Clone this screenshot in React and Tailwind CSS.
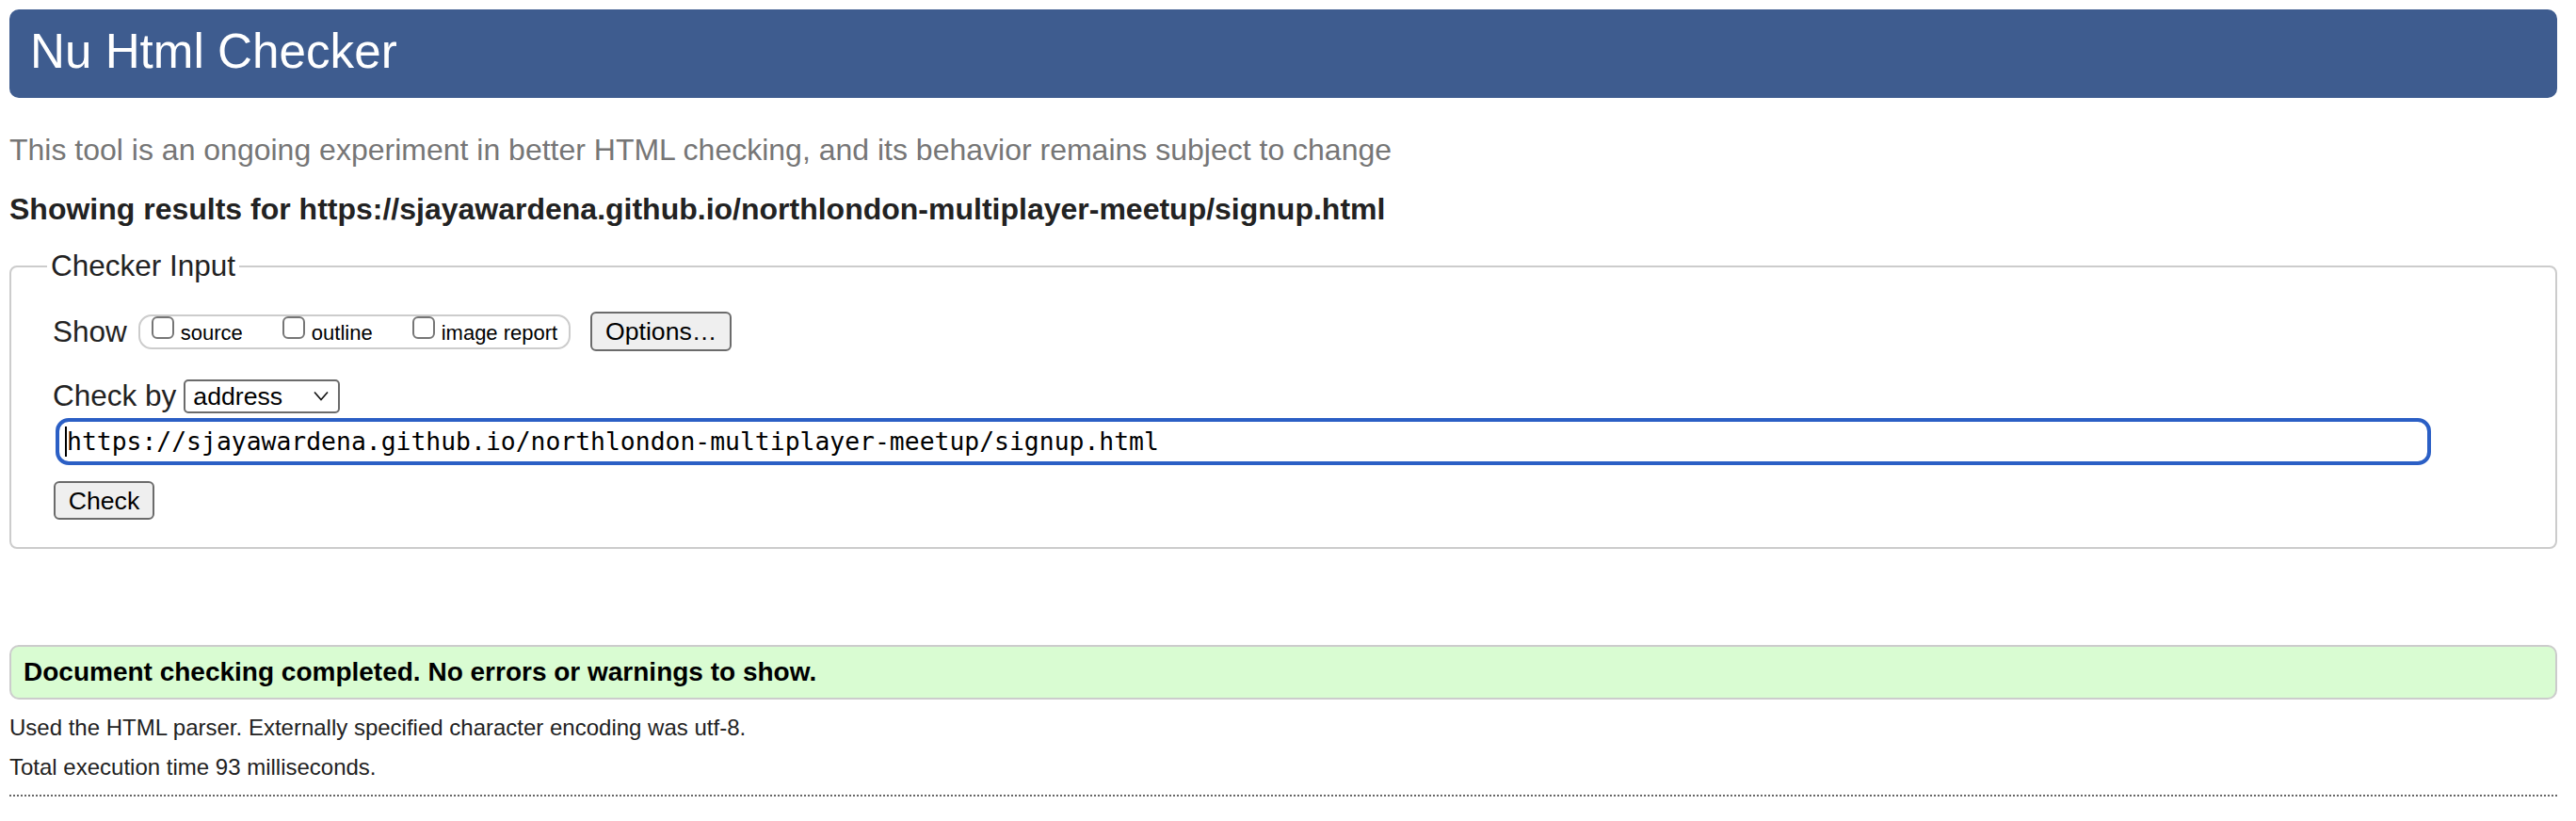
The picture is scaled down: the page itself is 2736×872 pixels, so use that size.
import React from 'react'

function Box({ label }) {
  return (
    <label className="flex items-start">
      <span className="w-[24px] h-[24px] shrink-0 rounded-[6px] border-2 border-[#767676] bg-white" />
      <span className="ml-[7px] mt-[5px] text-[22px] leading-[25px] text-black">{label}</span>
    </label>
  )
}

export default function App() {
  return (
    <div className="min-h-[872px] bg-white pl-[10px] pr-[20px] pt-[10px] font-['Liberation_Sans',Arial,Helvetica,sans-serif] text-[#222]">
      {/* banner */}
      <header className="flex h-[94px] items-center rounded-[10px] bg-[#3e5c8f] pb-[4px] pl-[22px]">
        <h1 className="text-[51.2px] leading-none font-normal text-white">Nu Html Checker</h1>
      </header>

      <p className="mt-[37px] text-[32px] leading-[37px] text-[#767676]">
        This tool is an ongoing experiment in better HTML checking, and its behavior remains subject to change
      </p>
      <p className="mt-[26px] text-[32px] leading-[37px] font-bold text-[#222]">
        Showing results for https://sjayawardena.github.io/northlondon-multiplayer-meetup/signup.html
      </p>

      {/* form */}
      <fieldset className="mt-[23px] rounded-[8px] border-2 border-[#cccccc] pt-[30px] pb-[29px] pl-[44px] pr-[44px]">
        <legend className="-ml-[6px] px-[4px] text-[31.5px] leading-[37px] text-[#222]">Checker Input</legend>

        <div className="flex h-[42px] items-center">
          <span className="text-[31.5px] leading-[37px]">Show</span>
          <div className="ml-[12px] flex h-[37px] items-start gap-[42px] rounded-[14px] border-2 border-[#cccccc] pl-[12px] pr-[12px]">
            <Box label="source" />
            <Box label="outline" />
            <Box label="image report" />
          </div>
          <button className="ml-[21px] flex h-[42px] w-[150px] items-center justify-center rounded-[6px] border-2 border-[#6b6b6b] bg-[#efefef] text-[26.67px] text-black">
            Options…
          </button>
        </div>

        <div className="mt-[29px] flex h-[37px] items-center">
          <span className="text-[31.5px] leading-[37px]">Check by</span>
          <div className="ml-[8px] flex h-[36px] w-[166px] items-center justify-between rounded-[5px] border-2 border-[#6b6b6b] bg-white pl-[8px] pr-[10px] text-[26.67px] text-black">
            <span>address</span>
            <svg width="16" height="11" viewBox="0 0 16 11">
              <path d="M1 1.5 L8 9.5 L15 1.5" fill="none" stroke="#111" strokeWidth="1.6" />
            </svg>
          </div>
        </div>

        <div className="mt-[5px] ml-[3px] mr-[88px] flex h-[50px] items-center rounded-[14px] border-4 border-[#2b5fc5] pl-[6px] font-['DejaVu_Sans_Mono',monospace] text-[26.4px] text-black">
          <span className="h-[32px] w-[2px] bg-black" />
          <span>https://sjayawardena.github.io/northlondon-multiplayer-meetup/signup.html</span>
        </div>

        <button className="mt-[17px] ml-[1px] flex h-[41px] w-[107px] items-center justify-center rounded-[6px] border-2 border-[#6b6b6b] bg-[#efefef] text-[26.67px] text-black">
          Check
        </button>
      </fieldset>

      {/* result */}
      <div className="mt-[102px] flex h-[58px] items-center rounded-[10px] border-2 border-[#cccccc] bg-[#d9fcd2] pl-[13px]">
        <p className="text-[28px] font-bold text-black">Document checking completed. No errors or warnings to show.</p>
      </div>

      <p className="mt-[16px] text-[24px] leading-[28px] text-[#222]">
        Used the HTML parser. Externally specified character encoding was utf-8.
      </p>
      <p className="mt-[14px] text-[24px] leading-[28px] text-[#222]">Total execution time 93 milliseconds.</p>
      <div className="mt-[15px] border-t-2 border-dotted border-[#666]" />
    </div>
  )
}
